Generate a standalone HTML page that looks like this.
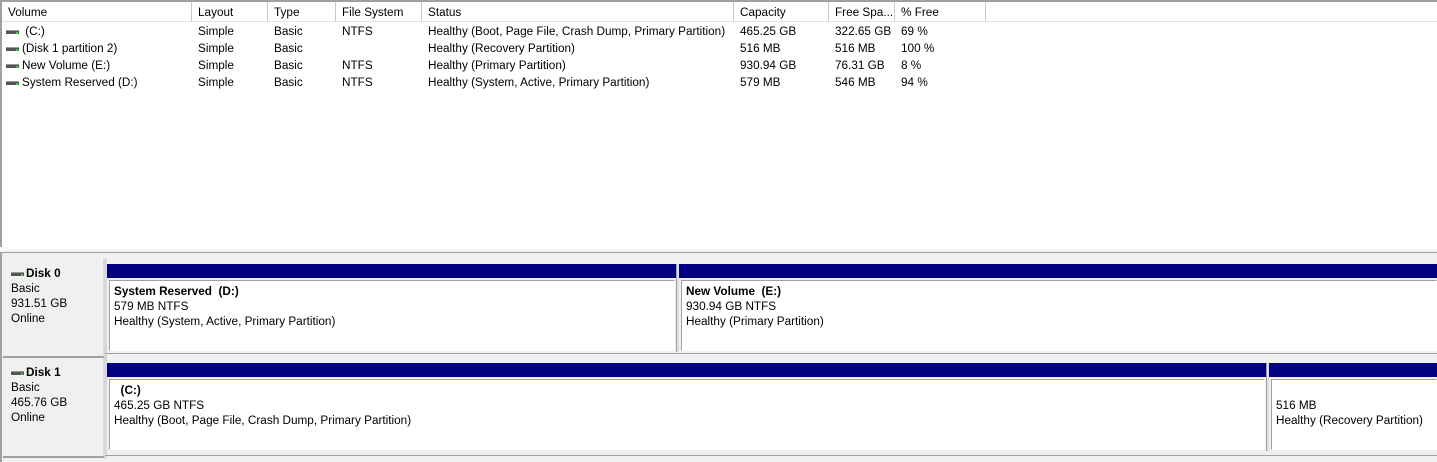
<!DOCTYPE html><html><head><style>
*{margin:0;padding:0;box-sizing:border-box}
body{width:1437px;height:462px;overflow:hidden;background:#f0f0f0;font-family:"Liberation Sans",sans-serif;font-size:11.75px;color:#000;position:relative}
.a{position:absolute;white-space:nowrap}
.top{position:absolute;left:0;top:0;width:1437px;height:247px;background:#fff;border-left:2px solid #a0a0a0;border-top:2px solid #a0a0a0}
.hd{position:absolute;top:2px;height:20px;border-right:1px solid #c8c8c8;border-bottom:1px solid #e0e0e0;background:#fff;padding:4px 0 0 6px;white-space:nowrap;overflow:hidden}
.ic{display:inline-block;width:13px;height:4px;background:#555;border-top:1px solid #999;position:relative;vertical-align:middle;margin-right:3px}
.ic:after{content:"";position:absolute;right:1px;top:1px;width:2px;height:2px;background:#4c4}
.bar{position:absolute;background:#000080;height:14px}
.box{position:absolute;background:#fff;border:1px solid #a0a0a0;border-right-color:#fff;border-bottom-color:#fff;padding:3px 0 0 4px;line-height:15px;white-space:nowrap}
.lbl{position:absolute;left:3px;width:102px;background:#f0f0f0;border-right:2px solid #d8d8d8;border-bottom:2px solid #a0a0a0;padding:7px 0 0 8px;line-height:15px}
</style></head><body>
<div class="top"></div>
<div class="hd" style="left:2px;width:190px">Volume</div>
<div class="hd" style="left:192px;width:76px">Layout</div>
<div class="hd" style="left:268px;width:68px">Type</div>
<div class="hd" style="left:336px;width:86px">File System</div>
<div class="hd" style="left:422px;width:312px">Status</div>
<div class="hd" style="left:734px;width:95px">Capacity</div>
<div class="hd" style="left:829px;width:66px">Free Spa...</div>
<div class="hd" style="left:895px;width:91px">% Free</div>
<div class="hd" style="left:986px;width:451px;border-right:none"></div>
<div class="a" style="left:6px;top:23px;line-height:17px">
<div><span class="ic"></span> (C:)</div><div><span class="ic"></span>(Disk 1 partition 2)</div><div><span class="ic"></span>New Volume (E:)</div><div><span class="ic"></span>System Reserved (D:)</div></div>
<div class="a" style="left:198px;top:23px;line-height:17px">Simple<br>Simple<br>Simple<br>Simple</div>
<div class="a" style="left:274px;top:23px;line-height:17px">Basic<br>Basic<br>Basic<br>Basic</div>
<div class="a" style="left:342px;top:23px;line-height:17px">NTFS<br>&nbsp;<br>NTFS<br>NTFS</div>
<div class="a" style="left:428px;top:23px;line-height:17px">Healthy (Boot, Page File, Crash Dump, Primary Partition)<br>Healthy (Recovery Partition)<br>Healthy (Primary Partition)<br>Healthy (System, Active, Primary Partition)</div>
<div class="a" style="left:740px;top:23px;line-height:17px">465.25 GB<br>516 MB<br>930.94 GB<br>579 MB</div>
<div class="a" style="left:835px;top:23px;line-height:17px">322.65 GB<br>516 MB<br>76.31 GB<br>546 MB</div>
<div class="a" style="left:901px;top:23px;line-height:17px">69 %<br>100 %<br>8 %<br>94 %</div>
<div class="a" style="left:0;top:247px;width:1437px;height:3px;background:#fafafa"></div>
<div class="a" style="left:0;top:252px;width:1437px;height:1px;background:#a0a0a0"></div>
<div class="a" style="left:0;top:253px;width:2px;height:209px;background:#a0a0a0"></div>

<div class="lbl" style="top:259px;height:99px"><b><span class="ic" style="margin-right:2px"></span>Disk 0</b><br>Basic<br>931.51 GB<br>Online</div>
<div class="a" style="left:105px;top:259px;width:2px;height:99px;background:#d8d8d8"></div>
<div class="bar" style="left:107px;top:264px;width:569px"></div>
<div class="bar" style="left:679px;top:264px;width:758px"></div>
<div class="a" style="left:676px;top:264px;width:3px;height:88px;background:#e0e0e0;border-left:1px solid #a0a0a0"></div>
<div class="box" style="left:109px;top:280px;width:566px;height:71px"><b>System Reserved &nbsp;(D:)</b><br>579 MB NTFS<br>Healthy (System, Active, Primary Partition)</div>
<div class="box" style="left:681px;top:280px;width:756px;height:71px"><b>New Volume &nbsp;(E:)</b><br>930.94 GB NTFS<br>Healthy (Primary Partition)</div>
<div class="a" style="left:105px;top:353px;width:1332px;height:1px;background:#a0a0a0"></div>

<div class="lbl" style="top:358px;height:100px"><b><span class="ic" style="margin-right:2px"></span>Disk 1</b><br>Basic<br>465.76 GB<br>Online</div>
<div class="a" style="left:105px;top:358px;width:2px;height:100px;background:#d8d8d8"></div>
<div class="bar" style="left:107px;top:363px;width:1159px"></div>
<div class="bar" style="left:1269px;top:363px;width:168px"></div>
<div class="a" style="left:1266px;top:363px;width:3px;height:88px;background:#e0e0e0;border-left:1px solid #a0a0a0"></div>
<div class="box" style="left:109px;top:379px;width:1156px;height:71px"><b>&nbsp; (C:)</b><br>465.25 GB NTFS<br>Healthy (Boot, Page File, Crash Dump, Primary Partition)</div>
<div class="box" style="left:1271px;top:379px;width:166px;height:71px">&nbsp;<br>516 MB<br>Healthy (Recovery Partition)</div>
<div class="a" style="left:105px;top:455px;width:1332px;height:1px;background:#a0a0a0"></div>
</body></html>
